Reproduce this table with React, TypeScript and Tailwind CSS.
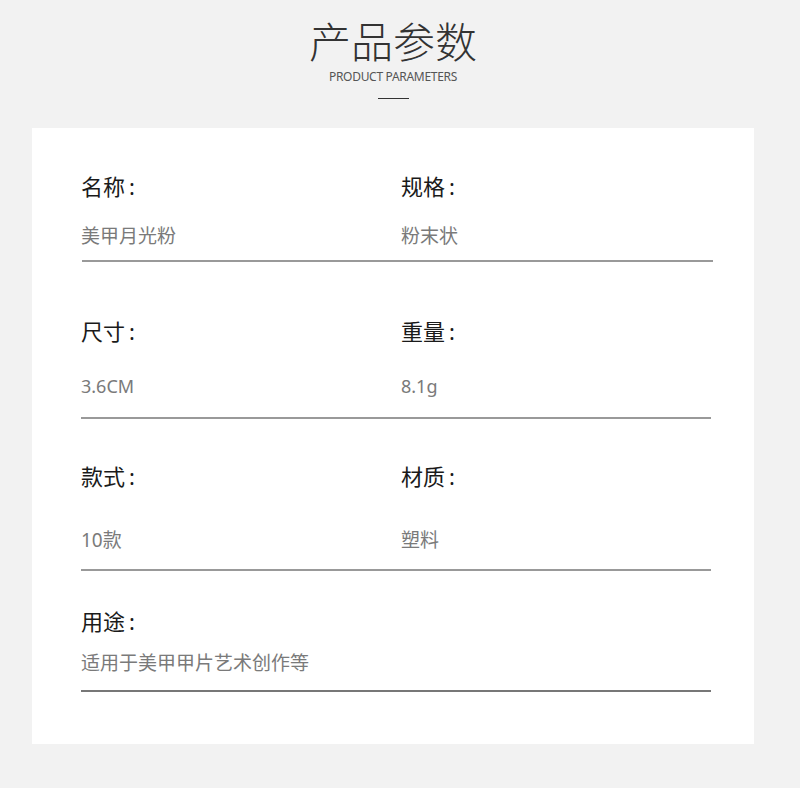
import React from "react";

const font = { fontFamily: '"Noto Sans", "Noto Sans CJK SC", sans-serif' };

export default function App() {
  return (
    <div className="w-[800px] h-[788px] bg-[#f2f2f2]" style={font}>
      <div className="ml-[32px] w-[722px] flex flex-col">
        <div className="flex flex-col items-center pt-[20px]">
          <div className="text-[42px] leading-[44px] font-light text-[#333333]">产品参数</div>
          <div className="mt-[5px] text-[12px] leading-[16px] text-[#555555] tracking-[-0.3px]">PRODUCT PARAMETERS</div>
          <div className="mt-[13px] w-[31px] h-px bg-[#333333]"></div>
        </div>
        <div className="mt-[29px] bg-white h-[616px] pl-[49px] flex flex-col">
          {/* Row 1 */}
          <div className="grid grid-cols-[320px_1fr] pt-[46px]">
            <div className="text-[22px] leading-[24px] text-[#1a1a1a]">名称<span className="ml-[4px]">:</span></div>
            <div className="text-[22px] leading-[24px] text-[#1a1a1a]">规格<span className="ml-[4px]">:</span></div>
            <div className="mt-[26px] text-[19px] leading-[24px] text-[#7a7a7a]">美甲月光粉</div>
            <div className="mt-[26px] text-[19px] leading-[24px] text-[#7a7a7a]">粉末状</div>
          </div>
          <div className="mt-[12px] ml-[1px] w-[631px] h-[2px] bg-[#999999]"></div>
          {/* Row 2 */}
          <div className="grid grid-cols-[320px_1fr] pt-[57px]">
            <div className="text-[22px] leading-[24px] text-[#1a1a1a]">尺寸<span className="ml-[4px]">:</span></div>
            <div className="text-[22px] leading-[24px] text-[#1a1a1a]">重量<span className="ml-[4px]">:</span></div>
            <div className="mt-[31px] text-[18px] leading-[24px] text-[#7a7a7a]">3.6CM</div>
            <div className="mt-[31px] text-[18px] leading-[24px] text-[#7a7a7a]">8.1g</div>
          </div>
          <div className="mt-[19px] w-[630px] h-[2px] bg-[#999999]"></div>
          {/* Row 3 */}
          <div className="grid grid-cols-[320px_1fr] pt-[45px]">
            <div className="text-[22px] leading-[24px] text-[#1a1a1a]">款式<span className="ml-[4px]">:</span></div>
            <div className="text-[22px] leading-[24px] text-[#1a1a1a]">材质<span className="ml-[4px]">:</span></div>
            <div className="mt-[40px] text-[19px] leading-[24px] text-[#7a7a7a]">10款</div>
            <div className="mt-[40px] text-[19px] leading-[24px] text-[#7a7a7a]">塑料</div>
          </div>
          <div className="mt-[17px] w-[630px] h-[2px] bg-[#999999]"></div>
          {/* Row 4 */}
          <div className="flex flex-col pt-[38px]">
            <div className="text-[22px] leading-[24px] text-[#1a1a1a]">用途<span className="ml-[4px]">:</span></div>
            <div className="mt-[18px] text-[19px] leading-[24px] text-[#7a7a7a]">适用于美甲甲片艺术创作等</div>
          </div>
          <div className="mt-[15px] w-[630px] h-[2px] bg-[#777777]"></div>
        </div>
      </div>
    </div>
  );
}
